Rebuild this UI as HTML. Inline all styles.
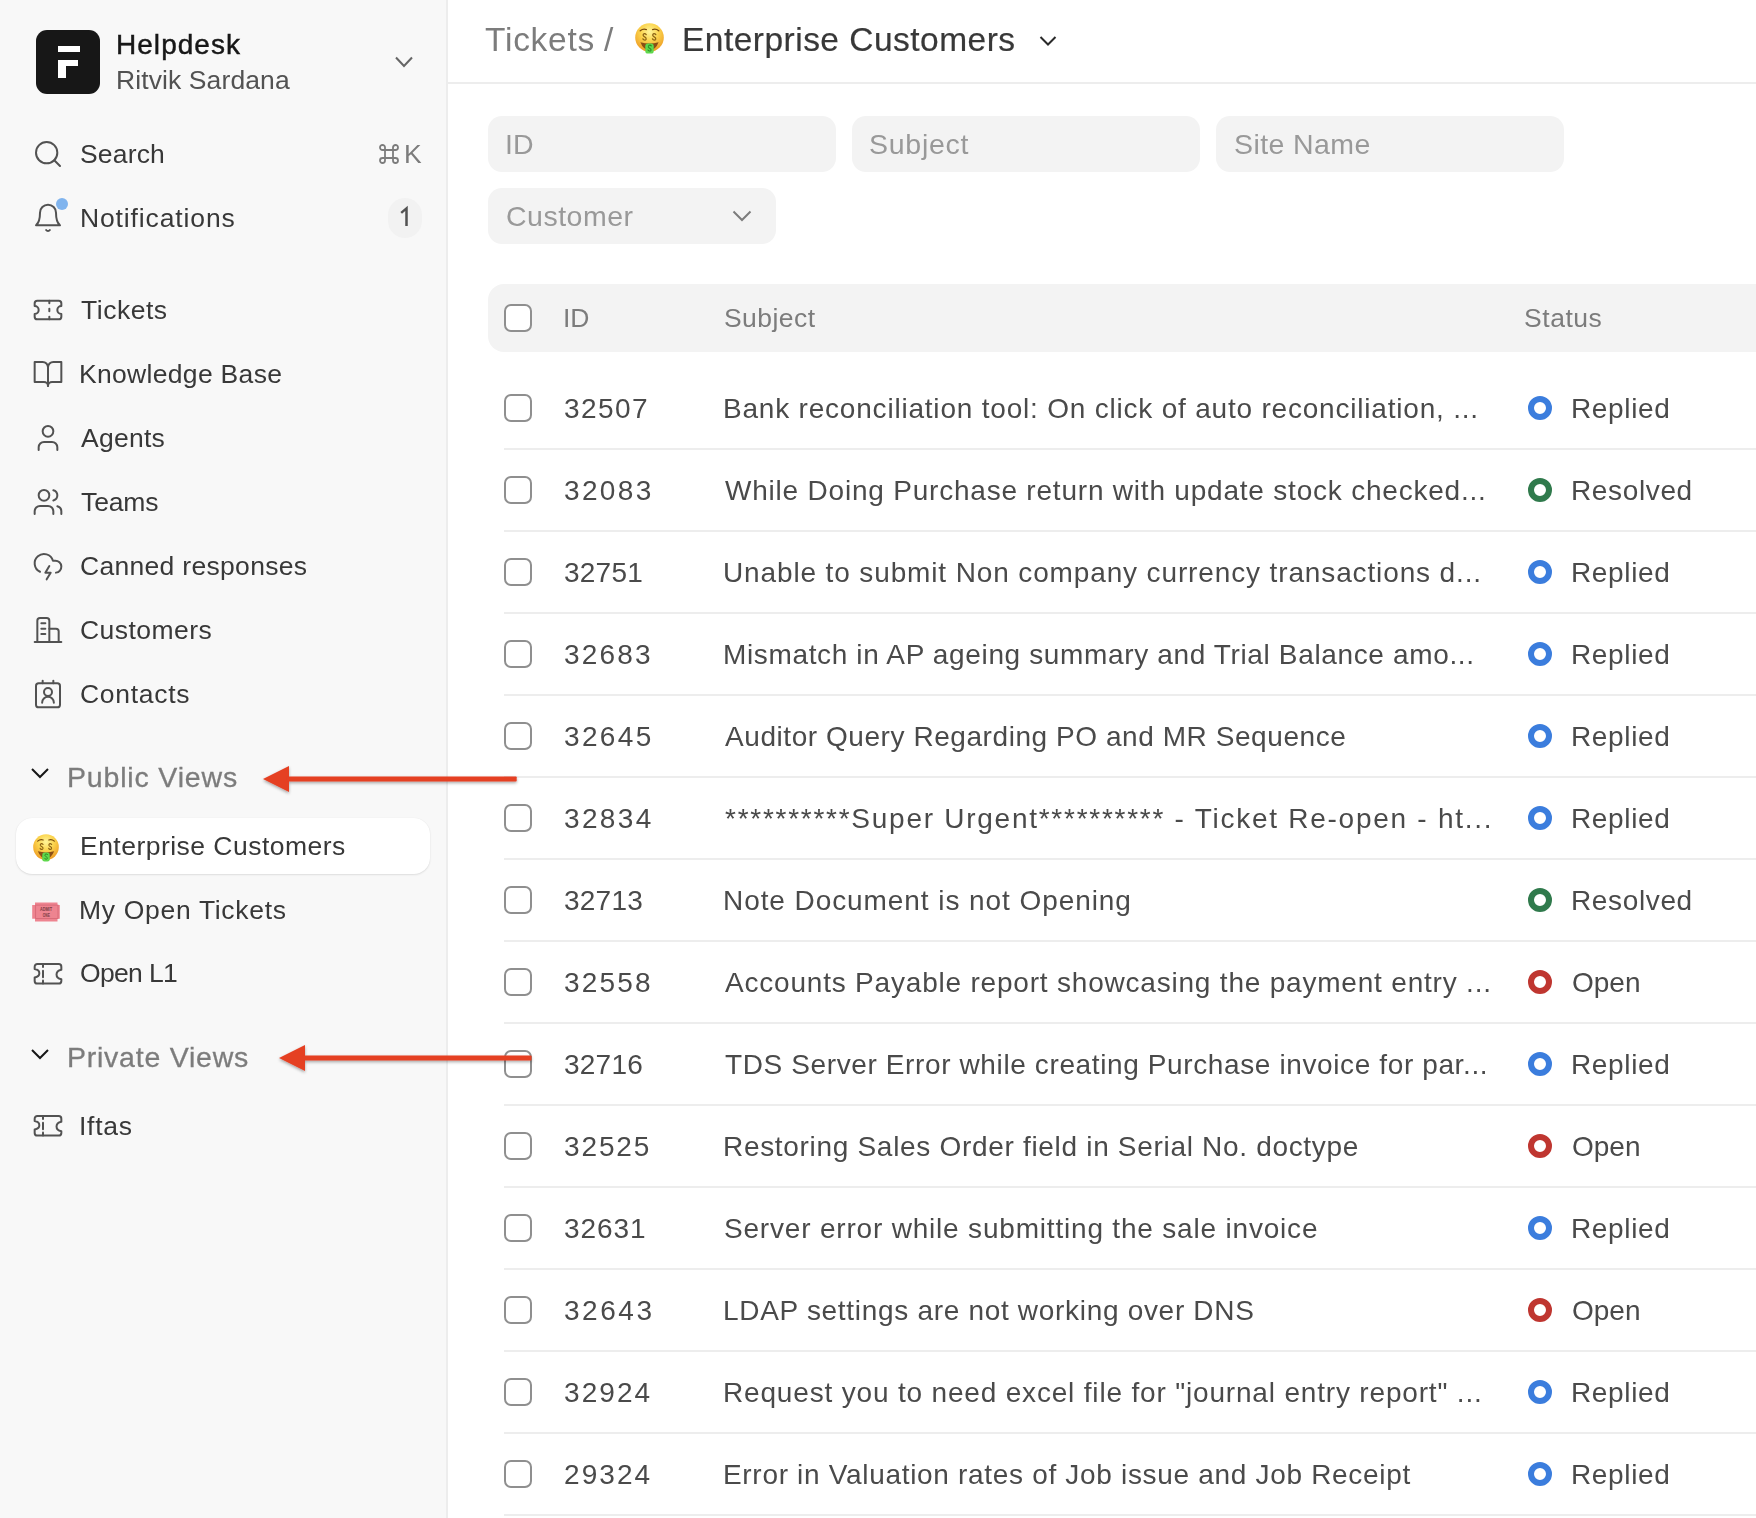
<!DOCTYPE html>
<html><head><meta charset="utf-8">
<style>
*{box-sizing:border-box;margin:0;padding:0}
html,body{width:1756px;height:1518px;overflow:hidden;background:#fff;font-family:"Liberation Sans",sans-serif}
.abs{position:absolute}
.t{position:absolute;white-space:nowrap;line-height:1;font-family:"Liberation Sans",sans-serif;will-change:transform}
</style></head>
<body>
<div class="abs" style="left:0;top:0;width:448px;height:1518px;background:#f8f8f8;border-right:2px solid #ededed"></div>
<div class="abs" style="left:36px;top:30px;width:64px;height:64px;border-radius:11px;background:#171717"></div>
<div class="abs" style="left:58px;top:46px;width:22px;height:6px;background:#fff"></div>
<div class="abs" style="left:58px;top:60px;width:20px;height:6px;background:#fff"></div>
<div class="abs" style="left:58px;top:60px;width:7.5px;height:18px;background:#fff"></div>
<svg class="abs" style="left:392px;top:52px;" width="24" height="20" viewBox="0 0 24 20" fill="none"><path d="M4 5.5 L12 14 L20 5.5" stroke="#666" stroke-width="2" fill="none"/></svg>
<svg class="abs" style="left:32px;top:138px;" width="32" height="32" viewBox="0 0 24 24" fill="none"><g stroke="#525252" stroke-width="1.5" stroke-linecap="round" stroke-linejoin="round" fill="none"><circle cx="11" cy="11" r="8"/><path d="m21 21-4.3-4.3"/></g></svg>
<svg class="abs" style="left:378px;top:143px;" width="22" height="22" viewBox="0 0 22 22" fill="none"><path d="M7 7h8v8H7z M7 7V4.5A2.5 2.5 0 1 0 4.5 7H7 M15 7V4.5A2.5 2.5 0 1 1 17.5 7H15 M7 15v2.5A2.5 2.5 0 1 1 4.5 15H7 M15 15v2.5a2.5 2.5 0 1 0 2.5-2.5H15" stroke="#7c7c7c" stroke-width="1.8" fill="none"/></svg>
<svg class="abs" style="left:32px;top:202px;" width="32" height="32" viewBox="0 0 24 24" fill="none"><g stroke="#525252" stroke-width="1.5" stroke-linecap="round" stroke-linejoin="round" fill="none"><path d="M6 8a6 6 0 0 1 12 0c0 7 2 8.5 3 9.5H3c1-1 3-2.5 3-9.5"/><path d="M10.6 21a1.7 1.7 0 0 0 2.8 0"/></g></svg>
<div class="abs" style="left:56px;top:198px;width:12px;height:12px;border-radius:50%;background:#80b4ee"></div>
<div class="abs" style="left:388px;top:198px;width:34px;height:40px;border-radius:17px;background:#f2f2f2"></div>
<svg class="abs" style="left:396px;top:204px;" width="16" height="26" viewBox="0 0 16 26" fill="none"><path d="M5.2 8.9 L10.5 4.4 V22" stroke="#525252" stroke-width="2.5" fill="none" stroke-linejoin="miter"/></svg>
<svg class="abs" style="left:32px;top:294px;" width="32" height="32" viewBox="0 0 24 24" fill="none"><g stroke="#525252" stroke-width="1.5" stroke-linecap="round" stroke-linejoin="round" fill="none"><path d="M2 9a3 3 0 0 1 0 6v2a2 2 0 0 0 2 2h16a2 2 0 0 0 2-2v-2a3 3 0 0 1 0-6V7a2 2 0 0 0-2-2H4a2 2 0 0 0-2 2Z"/><path d="M13 5v2"/><path d="M13 17v2"/><path d="M13 11v2"/></g></svg>
<svg class="abs" style="left:32px;top:358px;" width="32" height="32" viewBox="0 0 24 24" fill="none"><g stroke="#525252" stroke-width="1.5" stroke-linecap="round" stroke-linejoin="round" fill="none"><path d="M2 3h6a4 4 0 0 1 4 4v14a3 3 0 0 0-3-3H2z"/><path d="M22 3h-6a4 4 0 0 0-4 4v14a3 3 0 0 1 3-3h7z"/></g></svg>
<svg class="abs" style="left:32px;top:422px;" width="32" height="32" viewBox="0 0 24 24" fill="none"><g stroke="#525252" stroke-width="1.5" stroke-linecap="round" stroke-linejoin="round" fill="none"><path d="M19 21v-2a4 4 0 0 0-4-4H9a4 4 0 0 0-4 4v2"/><circle cx="12" cy="7" r="4"/></g></svg>
<svg class="abs" style="left:32px;top:486px;" width="32" height="32" viewBox="0 0 24 24" fill="none"><g stroke="#525252" stroke-width="1.5" stroke-linecap="round" stroke-linejoin="round" fill="none"><path d="M16 21v-2a4 4 0 0 0-4-4H6a4 4 0 0 0-4 4v2"/><circle cx="9" cy="7" r="4"/><path d="M22 21v-2a4 4 0 0 0-3-3.87"/><path d="M16 3.13a4 4 0 0 1 0 7.75"/></g></svg>
<svg class="abs" style="left:32px;top:550px;" width="32" height="32" viewBox="0 0 24 24" fill="none"><g stroke="#525252" stroke-width="1.5" stroke-linecap="round" stroke-linejoin="round" fill="none"><path d="M6 16.326A7 7 0 1 1 15.71 8h1.79a4.5 4.5 0 0 1 .5 8.973"/><path d="m13 12-3 5h4l-3 5"/></g></svg>
<svg class="abs" style="left:32px;top:614px;" width="32" height="32" viewBox="0 0 24 24" fill="none"><g stroke="#525252" stroke-width="1.5" stroke-linecap="round" stroke-linejoin="round" fill="none"><path d="M4 21V5a2 2 0 0 1 2-2h5a2 2 0 0 1 2 2v16"/><path d="M13 11h5a2 2 0 0 1 2 2v8"/><path d="M2 21h20"/><path d="M7 7h3"/><path d="M7 11h3"/><path d="M7 15h3"/></g></svg>
<svg class="abs" style="left:32px;top:678px;" width="32" height="32" viewBox="0 0 24 24" fill="none"><g stroke="#525252" stroke-width="1.5" stroke-linecap="round" stroke-linejoin="round" fill="none"><rect x="3" y="4" width="18" height="18" rx="2"/><path d="M8 2v2"/><path d="M16 2v2"/><circle cx="12" cy="10.5" r="3"/><path d="M7.6 18.5a4.4 4.4 0 0 1 8.8 0"/></g></svg>
<svg class="abs" style="left:28px;top:760px;width:24px;height:24px" width="24" height="24" viewBox="0 0 24 24" fill="none"><path d="M4 9 L12 17 L20 9" stroke="#171717" stroke-width="2" fill="none"/></svg>
<svg class="abs" style="left:28px;top:1041px;" width="24" height="24" viewBox="0 0 24 24" fill="none"><path d="M4 9 L12 17 L20 9" stroke="#171717" stroke-width="2" fill="none"/></svg>
<div class="abs" style="left:16px;top:818px;width:414px;height:56px;border-radius:16px;background:#fff;box-shadow:0 1px 2px rgba(0,0,0,0.10),0 0 1px rgba(0,0,0,0.08)"></div>
<svg class="abs" style="left:33px;top:834px;" width="26" height="28" viewBox="0 0 29 31" fill="none"><defs><radialGradient id="mg1" cx="50%" cy="30%" r="70%"><stop offset="0" stop-color="#fff59a"/><stop offset="0.45" stop-color="#fbd44e"/><stop offset="1" stop-color="#ee9a22"/></radialGradient></defs><circle cx="14.5" cy="14.5" r="14.3" fill="url(#mg1)"/><path d="M5.2 7.8Q8.2 5.4 11.4 6.6M17.6 6.6Q20.8 5.4 23.8 7.8" stroke="#7a4b0c" stroke-width="1.3" fill="none" stroke-linecap="round"/><path d="M11.2 11.6Q10.4 10.4 9.2 10.6Q7.8 11 8.2 12.6Q8.6 13.6 10 14.2Q11.4 14.9 11.1 16.2Q10.6 17.4 9.2 17Q8.2 16.7 7.9 15.8" stroke="#8d6416" stroke-width="1.3" fill="none" stroke-linecap="round"/><path d="M20.8 11.6Q20 10.4 18.8 10.6Q17.4 11 17.8 12.6Q18.2 13.6 19.6 14.2Q21 14.9 20.7 16.2Q20.2 17.4 18.8 17Q17.8 16.7 17.5 15.8" stroke="#8d6416" stroke-width="1.3" fill="none" stroke-linecap="round"/><path d="M5.4 19.2Q14.5 21.6 23.6 19.2Q20.5 27.2 14.5 27.2Q8.5 27.2 5.4 19.2Z" fill="#8a4e16"/><rect x="10.3" y="20.6" width="8.4" height="10" rx="2.6" fill="#5fd84d"/><path d="M16.3 22.8Q15.6 22 14.4 22.2Q13 22.6 13.4 24Q13.8 24.9 15 25.4Q16.3 26 16 27.2Q15.5 28.3 14.3 28Q13.4 27.7 13 27" stroke="#2f8a24" stroke-width="1.1" fill="none" stroke-linecap="round"/></svg>
<svg class="abs" style="left:635px;top:23px;" width="29" height="31" viewBox="0 0 29 31" fill="none"><defs><radialGradient id="mg2" cx="50%" cy="30%" r="70%"><stop offset="0" stop-color="#fff59a"/><stop offset="0.45" stop-color="#fbd44e"/><stop offset="1" stop-color="#ee9a22"/></radialGradient></defs><circle cx="14.5" cy="14.5" r="14.3" fill="url(#mg2)"/><path d="M5.2 7.8Q8.2 5.4 11.4 6.6M17.6 6.6Q20.8 5.4 23.8 7.8" stroke="#7a4b0c" stroke-width="1.3" fill="none" stroke-linecap="round"/><path d="M11.2 11.6Q10.4 10.4 9.2 10.6Q7.8 11 8.2 12.6Q8.6 13.6 10 14.2Q11.4 14.9 11.1 16.2Q10.6 17.4 9.2 17Q8.2 16.7 7.9 15.8" stroke="#8d6416" stroke-width="1.3" fill="none" stroke-linecap="round"/><path d="M20.8 11.6Q20 10.4 18.8 10.6Q17.4 11 17.8 12.6Q18.2 13.6 19.6 14.2Q21 14.9 20.7 16.2Q20.2 17.4 18.8 17Q17.8 16.7 17.5 15.8" stroke="#8d6416" stroke-width="1.3" fill="none" stroke-linecap="round"/><path d="M5.4 19.2Q14.5 21.6 23.6 19.2Q20.5 27.2 14.5 27.2Q8.5 27.2 5.4 19.2Z" fill="#8a4e16"/><rect x="10.3" y="20.6" width="8.4" height="10" rx="2.6" fill="#5fd84d"/><path d="M16.3 22.8Q15.6 22 14.4 22.2Q13 22.6 13.4 24Q13.8 24.9 15 25.4Q16.3 26 16 27.2Q15.5 28.3 14.3 28Q13.4 27.7 13 27" stroke="#2f8a24" stroke-width="1.1" fill="none" stroke-linecap="round"/></svg>
<svg class="abs" style="left:32px;top:902px;" width="28" height="20" viewBox="0 0 28 20" fill="none"><path d="M3 0.4H25.5V2.9H27.8V16.8H25.5V19.5H3V16.8H0.2V2.9H3Z" fill="#ee8490"/><rect x="3.6" y="3.1" width="22.4" height="13.4" fill="none" stroke="#d86a77" stroke-width="0.9"/><text x="14" y="9.2" font-size="5.2" font-family="Liberation Sans" font-weight="bold" fill="#7c3a44" text-anchor="middle" textLength="12" lengthAdjust="spacingAndGlyphs">ADMIT</text><text x="14.3" y="15" font-size="5.2" font-family="Liberation Sans" font-weight="bold" fill="#7c3a44" text-anchor="middle" textLength="7" lengthAdjust="spacingAndGlyphs">ONE</text></svg>
<svg class="abs" style="left:32px;top:958px;" width="32" height="32" viewBox="0 0 24 24" fill="none"><g stroke="#525252" stroke-width="1.5" stroke-linecap="round" stroke-linejoin="round" fill="none"><path d="M4 4.5H20A2 2 0 0 1 22 6.5V8.8C20 9.2 18.4 10.5 18.4 12.4C18.4 14.3 20 15.6 22 16V17.2A2 2 0 0 1 20 19.2H4A2 2 0 0 1 2 17.2V14.6C4 14.2 5.5 13 5.5 11.4C5.5 9.8 4 8.6 2 8.3V6.5A2 2 0 0 1 4 4.5Z"/><path d="M8.25 4.5v2.3"/><path d="M8.25 9.5v5"/><path d="M8.25 16.8v2.4"/></g></svg>
<svg class="abs" style="left:32px;top:1110px;" width="32" height="32" viewBox="0 0 24 24" fill="none"><g stroke="#525252" stroke-width="1.5" stroke-linecap="round" stroke-linejoin="round" fill="none"><path d="M4 4.5H20A2 2 0 0 1 22 6.5V8.8C20 9.2 18.4 10.5 18.4 12.4C18.4 14.3 20 15.6 22 16V17.2A2 2 0 0 1 20 19.2H4A2 2 0 0 1 2 17.2V14.6C4 14.2 5.5 13 5.5 11.4C5.5 9.8 4 8.6 2 8.3V6.5A2 2 0 0 1 4 4.5Z"/><path d="M8.25 4.5v2.3"/><path d="M8.25 9.5v5"/><path d="M8.25 16.8v2.4"/></g></svg>
<div class="abs" style="left:448px;top:82px;width:1308px;height:2px;background:#ededed"></div>
<svg class="abs" style="left:1036px;top:28px;" width="24" height="24" viewBox="0 0 24 24" fill="none"><path d="M4.5 9 L12 16.5 L19.5 9" stroke="#2a2a2a" stroke-width="2" fill="none"/></svg>
<div class="abs" style="left:488px;top:116px;width:348px;height:56px;border-radius:14px;background:#f3f3f3"></div>
<div class="abs" style="left:852px;top:116px;width:348px;height:56px;border-radius:14px;background:#f3f3f3"></div>
<div class="abs" style="left:1216px;top:116px;width:348px;height:56px;border-radius:14px;background:#f3f3f3"></div>
<div class="abs" style="left:488px;top:188px;width:288px;height:56px;border-radius:14px;background:#f3f3f3"></div>
<svg class="abs" style="left:730px;top:204px;" width="24" height="24" viewBox="0 0 24 24" fill="none"><path d="M3.5 7.5 L12 16 L20.5 7.5" stroke="#7c7c7c" stroke-width="2" fill="none"/></svg>
<div class="abs" style="left:488px;top:284px;width:1300px;height:68px;border-radius:16px;background:#f3f3f3"></div>
<div class="abs" style="left:504px;top:304px;width:28px;height:28px;border:2px solid #8f8f8f;border-radius:7px;background:#fff"></div>
<div class="abs" style="left:504px;top:394px;width:28px;height:28px;border:2px solid #8f8f8f;border-radius:7px;background:#fff"></div>
<div class="abs" style="left:504px;top:448px;width:1252px;height:2px;background:#ededed"></div>
<div class="abs" style="left:1528px;top:396px;width:24px;height:24px;border-radius:50%;border:6px solid #3b7ddd"></div>
<div class="abs" style="left:504px;top:476px;width:28px;height:28px;border:2px solid #8f8f8f;border-radius:7px;background:#fff"></div>
<div class="abs" style="left:504px;top:530px;width:1252px;height:2px;background:#ededed"></div>
<div class="abs" style="left:1528px;top:478px;width:24px;height:24px;border-radius:50%;border:6px solid #307a4c"></div>
<div class="abs" style="left:504px;top:558px;width:28px;height:28px;border:2px solid #8f8f8f;border-radius:7px;background:#fff"></div>
<div class="abs" style="left:504px;top:612px;width:1252px;height:2px;background:#ededed"></div>
<div class="abs" style="left:1528px;top:560px;width:24px;height:24px;border-radius:50%;border:6px solid #3b7ddd"></div>
<div class="abs" style="left:504px;top:640px;width:28px;height:28px;border:2px solid #8f8f8f;border-radius:7px;background:#fff"></div>
<div class="abs" style="left:504px;top:694px;width:1252px;height:2px;background:#ededed"></div>
<div class="abs" style="left:1528px;top:642px;width:24px;height:24px;border-radius:50%;border:6px solid #3b7ddd"></div>
<div class="abs" style="left:504px;top:722px;width:28px;height:28px;border:2px solid #8f8f8f;border-radius:7px;background:#fff"></div>
<div class="abs" style="left:504px;top:776px;width:1252px;height:2px;background:#ededed"></div>
<div class="abs" style="left:1528px;top:724px;width:24px;height:24px;border-radius:50%;border:6px solid #3b7ddd"></div>
<div class="abs" style="left:504px;top:804px;width:28px;height:28px;border:2px solid #8f8f8f;border-radius:7px;background:#fff"></div>
<div class="abs" style="left:504px;top:858px;width:1252px;height:2px;background:#ededed"></div>
<div class="abs" style="left:1528px;top:806px;width:24px;height:24px;border-radius:50%;border:6px solid #3b7ddd"></div>
<div class="abs" style="left:504px;top:886px;width:28px;height:28px;border:2px solid #8f8f8f;border-radius:7px;background:#fff"></div>
<div class="abs" style="left:504px;top:940px;width:1252px;height:2px;background:#ededed"></div>
<div class="abs" style="left:1528px;top:888px;width:24px;height:24px;border-radius:50%;border:6px solid #307a4c"></div>
<div class="abs" style="left:504px;top:968px;width:28px;height:28px;border:2px solid #8f8f8f;border-radius:7px;background:#fff"></div>
<div class="abs" style="left:504px;top:1022px;width:1252px;height:2px;background:#ededed"></div>
<div class="abs" style="left:1528px;top:970px;width:24px;height:24px;border-radius:50%;border:6px solid #bf3630"></div>
<div class="abs" style="left:504px;top:1050px;width:28px;height:28px;border:2px solid #8f8f8f;border-radius:7px;background:#fff"></div>
<div class="abs" style="left:504px;top:1104px;width:1252px;height:2px;background:#ededed"></div>
<div class="abs" style="left:1528px;top:1052px;width:24px;height:24px;border-radius:50%;border:6px solid #3b7ddd"></div>
<div class="abs" style="left:504px;top:1132px;width:28px;height:28px;border:2px solid #8f8f8f;border-radius:7px;background:#fff"></div>
<div class="abs" style="left:504px;top:1186px;width:1252px;height:2px;background:#ededed"></div>
<div class="abs" style="left:1528px;top:1134px;width:24px;height:24px;border-radius:50%;border:6px solid #bf3630"></div>
<div class="abs" style="left:504px;top:1214px;width:28px;height:28px;border:2px solid #8f8f8f;border-radius:7px;background:#fff"></div>
<div class="abs" style="left:504px;top:1268px;width:1252px;height:2px;background:#ededed"></div>
<div class="abs" style="left:1528px;top:1216px;width:24px;height:24px;border-radius:50%;border:6px solid #3b7ddd"></div>
<div class="abs" style="left:504px;top:1296px;width:28px;height:28px;border:2px solid #8f8f8f;border-radius:7px;background:#fff"></div>
<div class="abs" style="left:504px;top:1350px;width:1252px;height:2px;background:#ededed"></div>
<div class="abs" style="left:1528px;top:1298px;width:24px;height:24px;border-radius:50%;border:6px solid #bf3630"></div>
<div class="abs" style="left:504px;top:1378px;width:28px;height:28px;border:2px solid #8f8f8f;border-radius:7px;background:#fff"></div>
<div class="abs" style="left:504px;top:1432px;width:1252px;height:2px;background:#ededed"></div>
<div class="abs" style="left:1528px;top:1380px;width:24px;height:24px;border-radius:50%;border:6px solid #3b7ddd"></div>
<div class="abs" style="left:504px;top:1460px;width:28px;height:28px;border:2px solid #8f8f8f;border-radius:7px;background:#fff"></div>
<div class="abs" style="left:504px;top:1514px;width:1252px;height:2px;background:#ededed"></div>
<div class="abs" style="left:1528px;top:1462px;width:24px;height:24px;border-radius:50%;border:6px solid #3b7ddd"></div>
<div class="t" style="left:115.70px;top:31.49px;font-size:28px;color:#171717;letter-spacing:1.039px;-webkit-text-stroke:0.45px #171717;">Helpdesk</div>
<div class="t" style="left:115.70px;top:67.26px;font-size:26.5px;color:#525252;letter-spacing:0.101px;">Ritvik Sardana</div>
<div class="t" style="left:79.90px;top:140.56px;font-size:26.5px;color:#383838;letter-spacing:0.175px;">Search</div>
<div class="t" style="left:403.70px;top:140.56px;font-size:26.5px;color:#7c7c7c;letter-spacing:0.000px;">K</div>
<div class="t" style="left:79.50px;top:204.76px;font-size:26.5px;color:#383838;letter-spacing:0.868px;">Notifications</div>
<div class="t" style="left:81.20px;top:296.56px;font-size:26.5px;color:#383838;letter-spacing:0.518px;">Tickets</div>
<div class="t" style="left:79.20px;top:360.56px;font-size:26.5px;color:#383838;letter-spacing:0.311px;">Knowledge Base</div>
<div class="t" style="left:81.20px;top:424.56px;font-size:26.5px;color:#383838;letter-spacing:0.270px;">Agents</div>
<div class="t" style="left:81.20px;top:488.56px;font-size:26.5px;color:#383838;letter-spacing:-0.125px;">Teams</div>
<div class="t" style="left:80.20px;top:552.56px;font-size:26.5px;color:#383838;letter-spacing:0.306px;">Canned responses</div>
<div class="t" style="left:80.20px;top:616.56px;font-size:26.5px;color:#383838;letter-spacing:0.467px;">Customers</div>
<div class="t" style="left:80.20px;top:680.56px;font-size:26.5px;color:#383838;letter-spacing:0.710px;">Contacts</div>
<div class="t" style="left:67.30px;top:762.87px;font-size:28.5px;color:#7c7c7c;letter-spacing:0.827px;-webkit-text-stroke:0.3px #7c7c7c;">Public Views</div>
<div class="t" style="left:79.80px;top:832.76px;font-size:26.5px;color:#383838;letter-spacing:0.474px;">Enterprise Customers</div>
<div class="t" style="left:79.00px;top:896.66px;font-size:26.5px;color:#383838;letter-spacing:0.688px;">My Open Tickets</div>
<div class="t" style="left:80.00px;top:959.96px;font-size:26.5px;color:#383838;letter-spacing:-0.655px;">Open L1</div>
<div class="t" style="left:67.00px;top:1042.57px;font-size:28.5px;color:#7c7c7c;letter-spacing:0.760px;-webkit-text-stroke:0.3px #7c7c7c;">Private Views</div>
<div class="t" style="left:79.00px;top:1113.06px;font-size:26.5px;color:#383838;letter-spacing:0.744px;">Iftas</div>
<div class="t" style="left:485.40px;top:22.64px;font-size:33.5px;color:#7c7c7c;letter-spacing:0.733px;">Tickets</div>
<div class="t" style="left:604.00px;top:22.64px;font-size:33.5px;color:#7c7c7c;letter-spacing:0.000px;">/</div>
<div class="t" style="left:682.10px;top:23.14px;font-size:33.5px;color:#383838;letter-spacing:0.479px;-webkit-text-stroke:0.2px #383838;">Enterprise Customers</div>
<div class="t" style="left:505.30px;top:129.87px;font-size:28.5px;color:#999;letter-spacing:0.000px;">ID</div>
<div class="t" style="left:869.40px;top:129.87px;font-size:28.5px;color:#999;letter-spacing:0.743px;">Subject</div>
<div class="t" style="left:1233.50px;top:129.87px;font-size:28.5px;color:#999;letter-spacing:0.412px;">Site Name</div>
<div class="t" style="left:506.30px;top:201.57px;font-size:28.5px;color:#999;letter-spacing:0.494px;">Customer</div>
<div class="t" style="left:563.30px;top:304.76px;font-size:26.5px;color:#7c7c7c;letter-spacing:0.000px;">ID</div>
<div class="t" style="left:724.20px;top:304.76px;font-size:26.5px;color:#7c7c7c;letter-spacing:0.446px;">Subject</div>
<div class="t" style="left:1523.60px;top:304.66px;font-size:26.5px;color:#7c7c7c;letter-spacing:0.545px;">Status</div>
<div class="t" style="left:564.30px;top:395.39px;font-size:28px;color:#4a4a4a;letter-spacing:1.428px;">32507</div>
<div class="t" style="left:723.20px;top:395.39px;font-size:28px;color:#4a4a4a;letter-spacing:0.795px;">Bank reconciliation tool: On click of auto reconciliation, ...</div>
<div class="t" style="left:1571.30px;top:395.39px;font-size:28px;color:#4a4a4a;letter-spacing:0.654px;">Replied</div>
<div class="t" style="left:564.30px;top:477.39px;font-size:28px;color:#4a4a4a;letter-spacing:2.353px;">32083</div>
<div class="t" style="left:725.20px;top:477.39px;font-size:28px;color:#4a4a4a;letter-spacing:0.789px;">While Doing Purchase return with update stock checked...</div>
<div class="t" style="left:1571.30px;top:477.39px;font-size:28px;color:#4a4a4a;letter-spacing:0.635px;">Resolved</div>
<div class="t" style="left:564.30px;top:559.39px;font-size:28px;color:#4a4a4a;letter-spacing:0.228px;">32751</div>
<div class="t" style="left:723.20px;top:559.39px;font-size:28px;color:#4a4a4a;letter-spacing:0.868px;">Unable to submit Non company currency transactions d...</div>
<div class="t" style="left:1571.30px;top:559.39px;font-size:28px;color:#4a4a4a;letter-spacing:0.654px;">Replied</div>
<div class="t" style="left:564.30px;top:641.39px;font-size:28px;color:#4a4a4a;letter-spacing:2.153px;">32683</div>
<div class="t" style="left:723.20px;top:641.39px;font-size:28px;color:#4a4a4a;letter-spacing:0.643px;">Mismatch in AP ageing summary and Trial Balance amo...</div>
<div class="t" style="left:1571.30px;top:641.39px;font-size:28px;color:#4a4a4a;letter-spacing:0.654px;">Replied</div>
<div class="t" style="left:564.30px;top:723.39px;font-size:28px;color:#4a4a4a;letter-spacing:2.353px;">32645</div>
<div class="t" style="left:725.20px;top:723.39px;font-size:28px;color:#4a4a4a;letter-spacing:0.564px;">Auditor Query Regarding PO and MR Sequence</div>
<div class="t" style="left:1571.30px;top:723.39px;font-size:28px;color:#4a4a4a;letter-spacing:0.654px;">Replied</div>
<div class="t" style="left:564.30px;top:805.39px;font-size:28px;color:#4a4a4a;letter-spacing:2.353px;">32834</div>
<div class="t" style="left:725.20px;top:805.39px;font-size:28px;color:#4a4a4a;letter-spacing:1.738px;">**********Super Urgent********** - Ticket Re-open - ht...</div>
<div class="t" style="left:1571.30px;top:805.39px;font-size:28px;color:#4a4a4a;letter-spacing:0.654px;">Replied</div>
<div class="t" style="left:564.30px;top:887.39px;font-size:28px;color:#4a4a4a;letter-spacing:0.228px;">32713</div>
<div class="t" style="left:723.20px;top:887.39px;font-size:28px;color:#4a4a4a;letter-spacing:0.926px;">Note Document is not Opening</div>
<div class="t" style="left:1571.30px;top:887.39px;font-size:28px;color:#4a4a4a;letter-spacing:0.635px;">Resolved</div>
<div class="t" style="left:564.30px;top:969.39px;font-size:28px;color:#4a4a4a;letter-spacing:2.153px;">32558</div>
<div class="t" style="left:725.20px;top:969.39px;font-size:28px;color:#4a4a4a;letter-spacing:0.797px;">Accounts Payable report showcasing the payment entry ...</div>
<div class="t" style="left:1572.30px;top:969.39px;font-size:28px;color:#4a4a4a;letter-spacing:0.000px;">Open</div>
<div class="t" style="left:564.30px;top:1051.39px;font-size:28px;color:#4a4a4a;letter-spacing:0.228px;">32716</div>
<div class="t" style="left:725.20px;top:1051.39px;font-size:28px;color:#4a4a4a;letter-spacing:0.618px;">TDS Server Error while creating Purchase invoice for par...</div>
<div class="t" style="left:1571.30px;top:1051.39px;font-size:28px;color:#4a4a4a;letter-spacing:0.654px;">Replied</div>
<div class="t" style="left:564.30px;top:1133.39px;font-size:28px;color:#4a4a4a;letter-spacing:1.878px;">32525</div>
<div class="t" style="left:723.20px;top:1133.39px;font-size:28px;color:#4a4a4a;letter-spacing:0.689px;">Restoring Sales Order field in Serial No. doctype</div>
<div class="t" style="left:1572.30px;top:1133.39px;font-size:28px;color:#4a4a4a;letter-spacing:0.000px;">Open</div>
<div class="t" style="left:564.30px;top:1215.39px;font-size:28px;color:#4a4a4a;letter-spacing:0.953px;">32631</div>
<div class="t" style="left:724.20px;top:1215.39px;font-size:28px;color:#4a4a4a;letter-spacing:0.808px;">Server error while submitting the sale invoice</div>
<div class="t" style="left:1571.30px;top:1215.39px;font-size:28px;color:#4a4a4a;letter-spacing:0.654px;">Replied</div>
<div class="t" style="left:564.30px;top:1297.39px;font-size:28px;color:#4a4a4a;letter-spacing:2.528px;">32643</div>
<div class="t" style="left:723.20px;top:1297.39px;font-size:28px;color:#4a4a4a;letter-spacing:0.692px;">LDAP settings are not working over DNS</div>
<div class="t" style="left:1572.30px;top:1297.39px;font-size:28px;color:#4a4a4a;letter-spacing:0.000px;">Open</div>
<div class="t" style="left:564.30px;top:1379.39px;font-size:28px;color:#4a4a4a;letter-spacing:2.078px;">32924</div>
<div class="t" style="left:723.20px;top:1379.39px;font-size:28px;color:#4a4a4a;letter-spacing:0.824px;">Request you to need excel file for &quot;journal entry report&quot; ...</div>
<div class="t" style="left:1571.30px;top:1379.39px;font-size:28px;color:#4a4a4a;letter-spacing:0.654px;">Replied</div>
<div class="t" style="left:564.30px;top:1461.39px;font-size:28px;color:#4a4a4a;letter-spacing:2.078px;">29324</div>
<div class="t" style="left:723.20px;top:1461.39px;font-size:28px;color:#4a4a4a;letter-spacing:0.684px;">Error in Valuation rates of Job issue and Job Receipt</div>
<div class="t" style="left:1571.30px;top:1461.39px;font-size:28px;color:#4a4a4a;letter-spacing:0.654px;">Replied</div>
<svg class="abs" style="left:259.3px;top:759.4px;overflow:visible" width="263.7" height="40" viewBox="0 0 263.7 40"><defs><filter id="sh779.4" x="-10%" y="-50%" width="120%" height="200%"><feDropShadow dx="0" dy="1.5" stdDeviation="1.5" flood-color="#000" flood-opacity="0.35"/></filter></defs><g filter="url(#sh779.4)" fill="#e53f23"><path d="M4 20 L30 7 L30 33 Z"/><rect x="28" y="17.4" width="229.7" height="5.2" rx="0.8"/></g></svg>
<svg class="abs" style="left:274.5px;top:1038px;overflow:visible" width="262.5" height="40" viewBox="0 0 262.5 40"><defs><filter id="sh1058" x="-10%" y="-50%" width="120%" height="200%"><feDropShadow dx="0" dy="1.5" stdDeviation="1.5" flood-color="#000" flood-opacity="0.35"/></filter></defs><g filter="url(#sh1058)" fill="#e53f23"><path d="M4 20 L30 7 L30 33 Z"/><rect x="28" y="17.4" width="228.5" height="5.2" rx="0.8"/></g></svg>
</body></html>
